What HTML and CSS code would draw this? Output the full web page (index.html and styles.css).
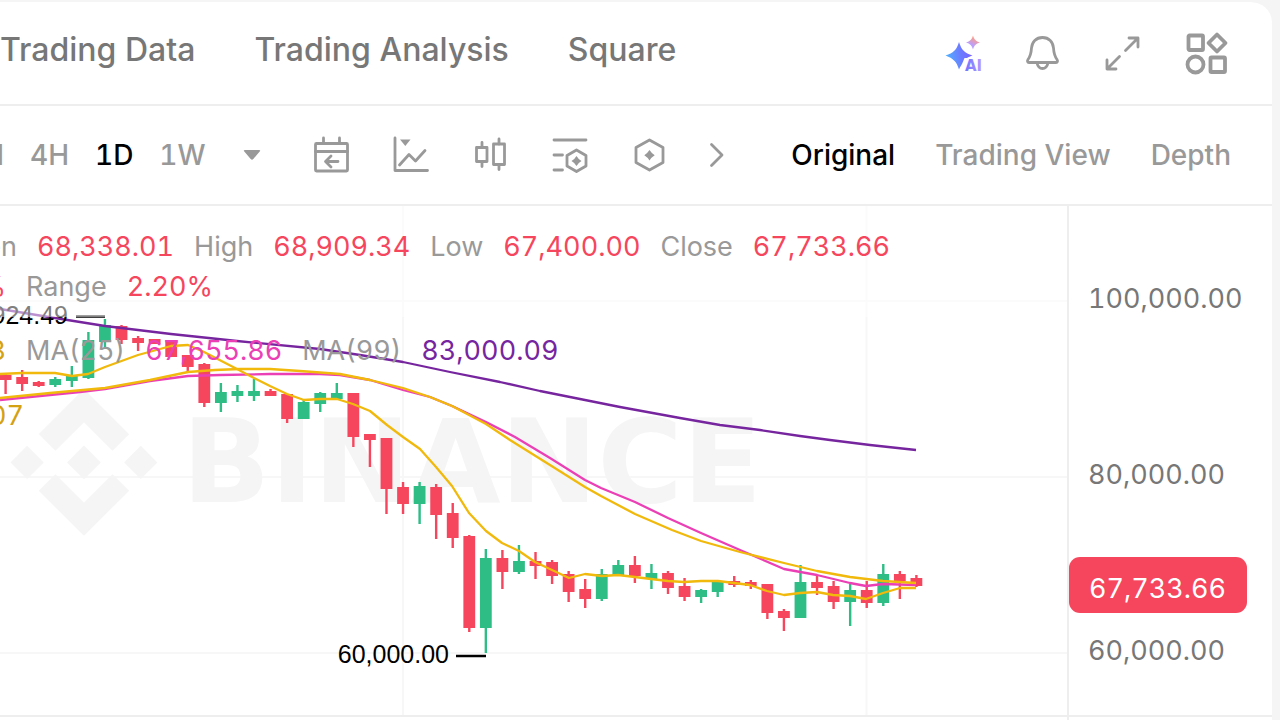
FILE: index.html
```html
<!DOCTYPE html>
<html lang="en">
<head>
  <meta charset="UTF-8">
  <meta name="viewport" content="width=device-width, initial-scale=1.0">
  <title>BTC/USDT chart</title>
  <link rel="stylesheet" href="styles.css">
</head>
<body>
  <div class="panel">
    <header class="header">
      <nav class="tabs">
        <a href="#">Trading Data</a>
        <a href="#">Trading Analysis</a>
        <a href="#">Square</a>
      </nav>
      <div class="header-icons">
        <button class="icon-btn" aria-label="AI">
          <svg viewBox="0 0 40 40">
            <defs>
              <linearGradient id="star" x1="0" y1="0.6" x2="1" y2="0.4">
                <stop offset="0" stop-color="#4fb4ff"/>
                <stop offset="0.55" stop-color="#6b7dff"/>
                <stop offset="1" stop-color="#7b62ff"/>
              </linearGradient>
              <linearGradient id="spark" x1="0.8" y1="0" x2="0.3" y2="1">
                <stop offset="0.2" stop-color="#ff9c86"/>
                <stop offset="0.7" stop-color="#b9a0ff"/>
              </linearGradient>
              <linearGradient id="ai" x1="0" y1="0" x2="1" y2="0">
                <stop offset="0" stop-color="#6f74ff"/>
                <stop offset="1" stop-color="#b79aff"/>
              </linearGradient>
            </defs>
            <path fill="url(#star)" d="M15 9c2.500 8 5.500 11 13.500 13.500c-2 .8-4 1.500-5.500 2.500h-2.500l-2.500 6c-1 1.500-2 3-3 5.500c-2.500-8-5.500-11-13.500-14c8-2.500 11-5.500 13.500-13.500z"/>
            <path fill="url(#spark)" d="M29 2.500c1.300 4.200 2.800 5.700 7 7c-4.200 1.300-5.700 2.800-7 7c-1.300-4.200-2.800-5.700-7-7c4.200-1.300 5.700-2.800 7-7z"/>
            <text class="ai-text" x="21" y="38" fill="url(#ai)">AI</text>
          </svg>
        </button>
        <button class="icon-btn" aria-label="Alerts">
          <svg class="line" viewBox="0 0 40 40">
            <path d="M19.500 4.500c-6.500 0-10.500 4.500-11 10.500c-.3 5-1 8-3.500 11.500c-1 1.500-.5 3 1 3h27c1.500 0 2-1.500 1-3c-2.500-3.500-3.200-6.500-3.500-11.500c-.5-6-4.500-10.500-11-10.500z"/>
            <path d="M14 30c.8 3.500 2.800 5.500 5.500 5.500s4.700-2 5.500-5.500"/>
          </svg>
        </button>
        <button class="icon-btn" aria-label="Full screen">
          <svg class="line" viewBox="0 0 40 40">
            <path d="M23.500 17.500L36 5M27 5h9v9M17.500 23.500L5 36M5 27v9h9"/>
          </svg>
        </button>
        <button class="icon-btn layout-btn" aria-label="Layout">
          <svg class="line thick" viewBox="0 0 40 40">
            <rect x="1.500" y="2.500" width="14.500" height="14.500" rx="1"/>
            <path d="M30 1.500l8.500 8.500l-8.500 8.500l-8.500-8.500z"/>
            <circle cx="8.500" cy="31.500" r="8"/>
            <rect x="23.500" y="24.500" width="14.500" height="14.500" rx="1"/>
          </svg>
        </button>
      </div>
    </header>

    <div class="toolbar">
      <div class="intervals">
        <button class="cut h">1H</button>
        <button>4H</button>
        <button class="active">1D</button>
        <button>1W</button>
      </div>
      <button class="caret" aria-label="More intervals">
        <svg viewBox="0 0 20 20"><path d="M3 5h14q2 0 .7 1.500l-6.400 7.500q-1.300 1.300-2.600 0l-6.400-7.500q-1.300-1.500.7-1.500z" fill="#999"/></svg>
      </button>
      <div class="tools">
        <button class="icon-btn" aria-label="Go to date">
          <svg class="line" viewBox="0 0 40 40">
            <rect x="5.500" y="8.500" width="32" height="27.500" rx="1"/>
            <path d="M5.500 16.500h32M13.500 3v5M29.500 3v5M28 26.500H16M21 21l-5.500 5.500l5.500 5.500"/>
          </svg>
        </button>
        <button class="icon-btn" aria-label="Chart">
          <svg class="line" viewBox="0 0 40 40">
            <path d="M5 3v32.500h32.500M9.500 30l9.500-10.500l6.500 6.500l9.500-10.500"/>
            <path class="solid" d="M10 4.500h10.500l-5.200 6.500z"/>
          </svg>
        </button>
        <button class="icon-btn" aria-label="Candles">
          <svg class="line" viewBox="0 0 40 40">
            <rect x="6.500" y="12.500" width="10.500" height="14"/>
            <rect x="23.500" y="9" width="11" height="20.500"/>
            <path d="M12 7.500v5M12 26.500v5M29 4v5M29 29.500v5"/>
          </svg>
        </button>
        <button class="icon-btn" aria-label="Indicators">
          <svg class="line" viewBox="0 0 40 40">
            <path d="M4 5h32M4 20h8.500M4 35h8.500M26.500 15l9.500 5.500v10.500l-9.500 5.500l-9.500-5.500v-10.500z"/>
            <path class="solid" d="M26.500 21q1.800 3.200 5 5q-3.200 1.800-5 5q-1.800-3.200-5-5q3.200-1.800 5-5z"/>
          </svg>
        </button>
        <button class="icon-btn" aria-label="Settings">
          <svg class="line" viewBox="0 0 40 40">
            <path d="M19.500 5l13.500 7.500v15l-13.500 7.500l-13.500-7.500v-15z"/>
            <path class="solid" d="M19.500 15q2 3.200 5.200 5.200q-3.200 2-5.200 5.200q-2-3.200-5.200-5.200q3.200-2 5.200-5.200z"/>
          </svg>
        </button>
      </div>
      <button class="next" aria-label="More tools">
        <svg class="line" viewBox="0 0 24 40"><path d="M6.500 9.500l10.500 10.500l-10.500 10.500"/></svg>
      </button>
      <div class="views">
        <button class="active">Original</button>
        <button>Trading View</button>
        <button>Depth</button>
      </div>
    </div>

    <main class="chart">
      <div class="plot">
        <svg class="plot-svg" viewBox="0 206 1067 509">
          <!-- grid -->
          <g class="grid">
            <path d="M0 301h1067M0 477h1067M0 653h1067M403 206v510M866.500 206v510"/>
          </g>
          <!-- watermark -->
          <g class="watermark">
            <path transform="translate(10.500 389) scale(1.160)" d="M38.730 53.200l24.590-24.580 24.600 24.600 14.300-14.310L63.320 0 24.420 38.900zM0 63.310l14.300-14.310 14.310 14.310-14.310 14.300zM38.730 73.410l24.590 24.590 24.600-24.600 14.310 14.290-38.910 38.910-38.910-38.880zM98 63.310l14.300-14.310 14.310 14.300-14.310 14.320zM77.830 63.300L63.320 48.780 48.810 63.280l14.510 14.500z"/>
            <text x="182" y="502">BINANCE</text>
          </g>
          <g id="candles"></g>
          <!-- moving averages -->
          <g class="ma">
            <polyline class="ma99" points="0,309 55,318 105,326 138,330 171,334 237,341 320,349 360,355 403,362 450,372 500,382 540,391 580,399 620,407 680,418 720,425 760,430 800,436 830,440 870,445 916,450"/>
            <polyline class="ma25" points="0,400 50,395 80,392 105,389 150,381 188,376 220,375 270,374 320,374 340,375 370,380 403,390 430,397 452,406 486,422 515,437 550,458 585,480 601,488 635,502 668,518 701,533 740,550 784,569 817,575 850,583 866,586 883,584 916,585"/>
            <polyline class="ma7" points="0,398 50,393 105,388 150,380 188,372 215,370 240,369 270,369 300,371 340,374 370,380 403,388 430,397 452,406 486,424 510,440 550,465 585,487 601,496 635,514 672,530 701,541 740,552 784,563 817,571 850,577 883,581 916,583"/>
            <polyline class="ma7" points="0,374 22,373 55,373 72,376 88,374 105,367 138,355 171,346 188,345 204,352 237,369 254,378 270,386 287,394 304,400 320,399 337,399 353,404 370,411 387,425 403,437 420,449 436,467 452,486 469,513 486,531 502,543 519,551 535,562 552,570 569,578 585,574 602,576 618,575 635,577 651,579 668,581 684,582 701,581 718,581 734,583 750,585 767,591 784,595 800,593 817,592 833,595 850,596 866,599 883,593 900,588 916,588"/>
          </g>
          <g class="extremes">
            <text x="68" y="324">924.49</text>
            <path d="M76 316.500h29M456 656h30"/>
            <text x="449" y="663">60,000.00</text>
          </g>
        </svg>
        <div class="legend">
          <div class="ohlc">
            <div class="row">
              <span class="cut n">Open</span><span class="red">68,338.01</span>
              <span>High</span><span class="red">68,909.34</span>
              <span>Low</span><span class="red">67,400.00</span>
              <span>Close</span><span class="red">67,733.66</span>
            </div>
            <div class="row">
              <span class="cut p red">%</span>
              <span>Range</span><span class="red">2.20%</span>
            </div>
          </div>
          <div class="row">
            <span class="cut p gold">8</span>
            <span>MA(25)</span><span class="pink">67,655.86</span>
            <span>MA(99)</span><span class="purple">83,000.09</span>
          </div>
          <div class="row second"><span class="cut e gold">07</span></div>
        </div>
      </div>
      <div class="axis">
        <div>100,000.00</div>
        <div>80,000.00</div>
        <div>60,000.00</div>
        <div class="price">67,733.66</div>
      </div>
    </main>
    <div class="volume"><div class="volume-plot"></div></div>
  </div>

  <script src="script.js"></script>
</body>
</html>
```

FILE: styles.css
```css
*{
  box-sizing: border-box;
}
body{
  margin: 0;
  background-color: #f5f5f5;
  font-family: Inter, "Liberation Sans", sans-serif;
  font-variant-numeric: tabular-nums;
  height: 100vh;
  overflow: hidden;
}
button{
  border: none;
  background: none;
  padding: 0;
  font: inherit;
  font-variant-numeric: tabular-nums;
  color: inherit;
  cursor: pointer;
  white-space: nowrap;
}
svg{
  display: block;
}
.panel{
  display: flex;
  flex-direction: column;
  height: 100%;
  margin-right: 8px;
  border-top: 2px solid #f5f5f5;
  background-color: white;
  border-top-right-radius: 22px;
  overflow: hidden;
}
.header{
  display: flex;
  flex-shrink: 0;
  justify-content: space-between;
  align-items: center;
  height: 104px;
  padding-right: 45px;
  border-bottom: 2px solid #eee;
}
.tabs{
  display: flex;
  gap: 59px;
  font-size: 32px;
  font-weight: 500;
  line-height: 40px;
  padding-bottom: 6px;
}
.tabs a{
  color: #777;
  text-decoration: none;
  white-space: nowrap;
}
.header-icons{
  display: flex;
  gap: 39px;
}
.layout-btn{
  margin-left: 6px;
}
.icon-btn{
  width: 40px;
  height: 40px;
}
.icon-btn svg{
  width: 40px;
  height: 40px;
  overflow: visible;
}
.line{
  fill: none;
  stroke: #999;
  stroke-width: 2.8;
  stroke-linecap: round;
  stroke-linejoin: round;
}
.thick{
  stroke-width: 3.8;
}
.solid{
  fill: #999;
  stroke: none;
}
.ai-text{
  font: bold 15px "DejaVu Sans", sans-serif;
}

/* toolbar */
.toolbar{
  display: flex;
  flex-shrink: 0;
  align-items: center;
  height: 100px;
  padding-right: 41px;
  border-bottom: 2px solid #eee;
  color: #999;
  font-size: 28px;
  font-weight: 500;
  line-height: 40px;
}
.intervals{
  display: flex;
  gap: 26px;
}
.active{
  color: black;
}
.caret{
  width: 20px;
  margin-left: 36px;
}
.tools{
  display: flex;
  gap: 40px;
  margin-left: 48px;
}
.next{
  width: 24px;
  margin-left: 35px;
}
.views{
  display: flex;
  gap: 40px;
  margin-left: auto;
}

/* first item of a row, running off the left edge */
.cut{
  display: flex;
  justify-content: flex-end;
}
.cut.h{
  width: 4px;
}
.cut.n{
  width: 17px;
}
.cut.p{
  width: 6px;
}
.cut.e{
  width: 24px;
}

/* chart */
.chart{
  display: flex;
  flex-shrink: 0;
  border-bottom: 2px solid #eee;
}
.plot{
  position: relative;
  flex: 1;
  min-width: 0;
}
.plot-svg{
  width: 100%;
  height: auto;
}
.grid{
  stroke: #f7f7f7;
  stroke-width: 2;
}
.watermark{
  fill: #f5f5f5;
  font: bold 116px "DejaVu Sans", sans-serif;
}
.up{
  fill: #2ebd85;
}
.down{
  fill: #f6465d;
}
.ma{
  fill: none;
  stroke-width: 2.3;
  stroke-linejoin: round;
}
.ma99{
  stroke: #76259f;
}
.ma25{
  stroke: #eb40b5;
}
.ma7{
  stroke: #f0b90b;
}
.extremes{
  font: 25px "Liberation Sans", sans-serif;
  text-anchor: end;
  stroke-width: 2.5;
}
.extremes path{
  stroke: black;
}
.extremes text{
  stroke: none;
}
.legend{
  position: absolute;
  top: 0;
  left: 0;
  width: 100%;
  color: #999;
  font-size: 27px;
  line-height: 40px;
}
.ohlc{
  padding: 21px 0 10px;
  margin-bottom: 14px;
  background-color: rgba(255,255,255,.5);
}
.row{
  display: flex;
  gap: 20px;
  white-space: nowrap;
}
.second{
  margin-top: 25px;
}
.red{
  color: #f6465d;
}
.gold{
  color: #d5a114;
}
.pink{
  color: #eb40b5;
}
.purple{
  color: #76259f;
}
.axis{
  position: relative;
  display: flex;
  flex-direction: column;
  gap: 136px;
  width: 205px;
  padding: 73px 0 0 19px;
  border-left: 2px solid #eee;
  color: #777;
  font-size: 27px;
  line-height: 40px;
}
.price{
  position: absolute;
  top: 351px;
  left: 0;
  width: 178px;
  padding: 12px 0 4px 20px;
  border-radius: 11px;
  background-color: #f6465d;
  color: white;
}
.volume{
  display: flex;
  flex: 1;
  padding-right: 203px;
}
.volume-plot{
  flex: 1;
  border-right: 2px solid #eee;
}
```

FILE: script.js
```js
// [body top, body bottom, wick top, wick bottom, up]
const candles = [
  [375,380,374,394,0],[377,384,370,391,0],[382,386,381,387,0],[379,385,377,387,1],
  [376,381,366,387,1],[340,378,332,379,1],[325,342,319,347,1],[326,340,325,344,0],
  [338,343,336,351,0],[339,344,339,344,0],[342,357,342,357,0],[355,367,355,372,0],
  [364,403,363,407,0],[392,403,383,412,1],[391,396,385,402,1],[391,396,379,401,1],
  [391,396,389,396,0],[394,419,394,423,0],[402,419,400,419,1],[393,404,392,412,1],
  [393,399,383,399,1],[393,437,393,447,0],[434,440,434,467,0],[438,489,438,514,0],
  [487,504,482,514,0],[486,504,482,524,1],[487,515,484,539,0],[513,538,503,548,0],
  [536,628,535,632,0],[558,628,549,653,1],[558,572,550,589,0],[561,572,545,574,1],
  [561,566,552,579,0],[562,576,560,584,0],[574,592,571,602,0],[589,599,579,608,0],
  [574,599,569,601,1],[565,576,560,576,1],[565,576,556,583,0],[573,579,564,589,1],
  [573,588,571,594,0],[586,597,578,601,0],[590,597,589,603,1],[582,592,580,597,1],
  [581,585,576,587,0],[582,586,580,589,0],[584,613,584,619,0],[611,618,609,631,0],
  [582,618,565,618,1],[582,588,576,595,0],[586,602,581,609,0],[590,602,584,626,1],
  [590,603,581,608,0],[574,603,564,606,1],[574,581,571,599,0],[578,586,575,587,0]
];
const step = 16.56;

document.querySelector('#candles').innerHTML = candles
  .map(([top, bottom, high, low, up], i) => {
    const x = 5.6 + i * step;
    return `<g class="${up ? 'up' : 'down'}">
      <rect x="${x - 1.2}" y="${high}" width="2.4" height="${low - high}"/>
      <rect x="${x - 5.9}" y="${top}" width="11.8" height="${bottom - top}"/>
    </g>`;
  })
  .join('');
```
